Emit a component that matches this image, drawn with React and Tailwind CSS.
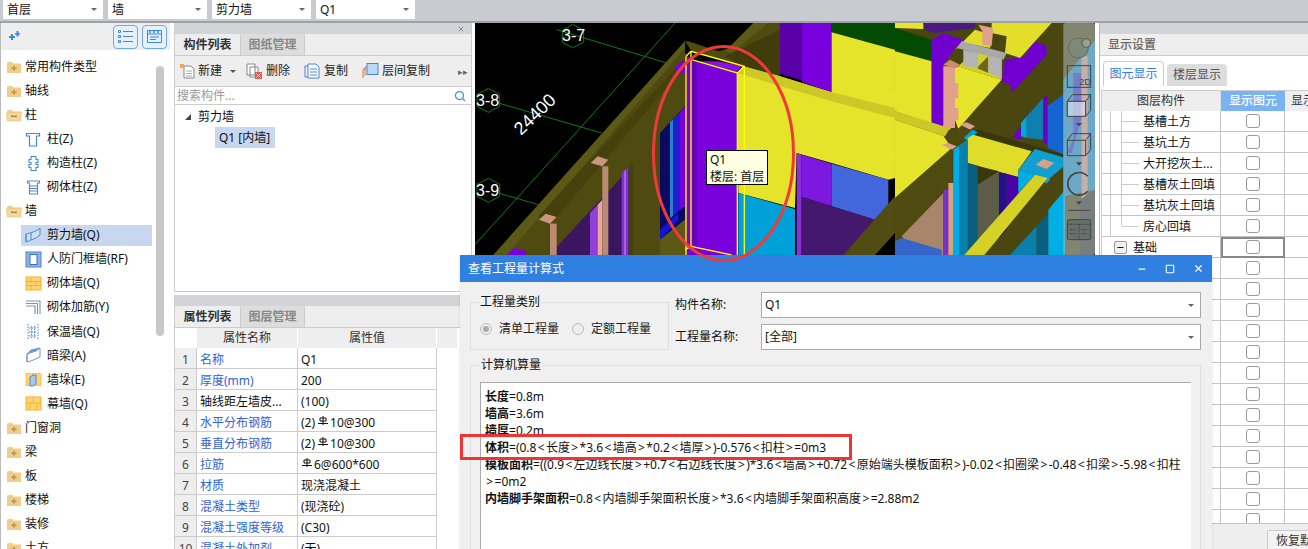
import { Minus, Search, Square, X } from 'lucide-react'

const TREE = [
    { label: '常用构件类型', type: 'closed' },
    { label: '轴线', type: 'closed' },
    { label: '柱', type: 'open' },
    { label: '柱(Z)', icon: 'column' },
    { label: '构造柱(Z)', icon: 'gzz' },
    { label: '砌体柱(Z)', icon: 'brickcol' },
    { label: '墙', type: 'open' },
    { label: '剪力墙(Q)', icon: 'shear', active: true },
    { label: '人防门框墙(RF)', icon: 'frame' },
    { label: '砌体墙(Q)', icon: 'brick' },
    { label: '砌体加筋(Y)', icon: 'rebar' },
    { label: '保温墙(Q)', icon: 'insul' },
    { label: '暗梁(A)', icon: 'beam' },
    { label: '墙垛(E)', icon: 'pier' },
    { label: '幕墙(Q)', icon: 'curtain' },
    { label: '门窗洞', type: 'closed' },
    { label: '梁', type: 'closed' },
    { label: '板', type: 'closed' },
    { label: '楼梯', type: 'closed' },
    { label: '装修', type: 'closed' },
    { label: '土方', type: 'closed' },
]

const PROPS = [
    { name: '名称', value: 'Q1', blue: true },
    { name: '厚度(mm)', value: '200', blue: true },
    { name: '轴线距左墙皮...', value: '(100)' },
    { name: '水平分布钢筋', value: '10@300', pre: '(2)', rebar: true, blue: true },
    { name: '垂直分布钢筋', value: '10@300', pre: '(2)', rebar: true, blue: true },
    { name: '拉筋', value: '6@600*600', rebar: true, blue: true },
    { name: '材质', value: '现浇混凝土', blue: true },
    { name: '混凝土类型', value: '(现浇砼)', blue: true },
    { name: '混凝土强度等级', value: '(C30)', blue: true },
    { name: '混凝土外加剂', value: '(无)', blue: true },
]

const LAYERS = ['基槽土方', '基坑土方', '大开挖灰土...', '基槽灰土回填', '基坑灰土回填', '房心回填']
const EXTRA_ROWS = Array.from({ length: 13 }, (_, i) => i)

function Folder({ open }) {
    return (
        <svg width="16" height="14" viewBox="0 0 16 14" className="shrink-0">
            <path d="M1 3.5 L1 2.5 L6 1.5 L7 3.5 L15 3.5 L15 13 L1 13 Z" fill="#f0cd8c" />
            {open ? (
                <>
                    <path d="M0 5 L15.5 4 L14.5 13 L1.5 13 Z" fill="#f5d79e" stroke="#e3b970" strokeWidth="0.5" />
                    <rect x="5" y="7.5" width="6" height="1.6" fill="#b58a3e" />
                </>
            ) : (
                <>
                    <rect x="5.5" y="7.5" width="5" height="1.6" fill="#c2963f" />
                    <rect x="7.2" y="5.8" width="1.6" height="5" fill="#c2963f" />
                </>
            )}
        </svg>
    )
}

function TreeIcon({ name }) {
    const blue = '#4a86d0'
    const amber = '#f8b418'
    return (
        <svg width="17" height="17" viewBox="0 0 17 17" fill="none" className="shrink-0">
            {name === 'column' && <path d="M1.5 2.5h13v2.5h-3v10h-7V5h-3z" stroke={blue} strokeWidth="1.2" />}
            {name === 'gzz' && <path d="M6 1.5h5v3h2v3h-2v2h2v3h-2v3H6v-3H4v-3h2v-2H4v-3h2z" stroke={blue} strokeWidth="1.1" />}
            {name === 'brickcol' && <path d="M2.5 2h12v2h-2v11h-8V4h-2zM5 7h7M5 9.500h7M5 12h7" stroke="#5b86bb" strokeWidth="1.1" />}
            {name === 'shear' && (
                <>
                    <path d="M1 7 C5 6 11 5 15 1 L15 8 C11 12 5 13 1 15 Z" fill="#cfe0f5" stroke={blue} />
                    <path d="M1 7 L1 15 M6 6 L6 13" stroke={blue} />
                </>
            )}
            {name === 'frame' && (
                <>
                    <rect x="1" y="1" width="15" height="15" fill="#8fb4e4" stroke={blue} />
                    <rect x="5" y="3.500" width="7" height="10" fill="#fff" stroke="#3a6fb5" />
                </>
            )}
            {name === 'brick' && (
                <>
                    <rect x="1" y="2" width="15" height="13" fill="#ffd27a" stroke={amber} />
                    <path d="M1 6.500h15M1 10.500h15M6 2v4.500M11 6.500v4M6 10.500V15" stroke={amber} />
                </>
            )}
            {name === 'rebar' && <path d="M1 2h14v13M1 4.500h11.500V15M1 7h9v8" stroke="#7d93ad" strokeWidth="1.1" />}
            {name === 'insul' && <path d="M3 1v15M13 1v15M6.500 3v12M9.500 3v12M4 5h8M4 9h8M4 13h8" stroke={blue} strokeDasharray="1.5 1.2" />}
            {name === 'beam' && (
                <>
                    <path d="M2 7 L6 3 L15 1 L15 10 L6 14 L2 15 Z" fill="#fff" stroke="#7d93ad" />
                    <path d="M2 7 L11 4 L15 1 M2 7V15" stroke="#7d93ad" />
                    <path d="M3 6 L6 3 L15 1 L11 4 Z" fill="#5f9be0" />
                </>
            )}
            {name === 'pier' && (
                <>
                    <rect x="1" y="2.500" width="15" height="12" fill="#ffd27a" stroke={amber} strokeDasharray="2 1" />
                    <path d="M5 6 L8 4 L11 4 L11 13 L8 15 L5 15 Z" fill="#a8c8ee" stroke={blue} />
                </>
            )}
            {name === 'curtain' && (
                <>
                    <rect x="1" y="2" width="15" height="13" fill="#ffd27a" stroke={amber} />
                    <path d="M1 8h15M8.500 2v6M5 8v7M12 8v7" stroke={amber} />
                </>
            )}
        </svg>
    )
}

function SelectBox({ label, className }) {
    return (
        <div className={`flex h-[19px] items-center justify-between bg-white pl-1 pr-1.5 text-xs ${className}`}>
            <span>{label}</span>
            <span className="h-0 w-0 border-x-[3px] border-t-[3px] border-x-transparent border-t-[#666]" />
        </div>
    )
}

function RebarMark() {
    return (
        <svg width="10" height="10" viewBox="0 0 10 10" fill="none" className="mb-1 ml-px mr-[2px] inline-block">
            <path d="M2 2h6v3H2zM5 0v9M0 7.500h10" stroke="#111" strokeWidth="1" />
        </svg>
    )
}

function LeftPanel() {
    return (
        <aside className="flex h-full w-[170px] shrink-0 flex-col border-l border-[#bbb] bg-white">
            <div className="flex h-[27px] shrink-0 items-center justify-between bg-[#eeeeee] pl-[6px] pr-[3px]">
                <svg width="13" height="11" viewBox="0 0 13 11" fill="#3f85d8">
                    <path d="M2 5h2V3h2v2h2v2H6v2H4V7H2zM8 2h1.500V0h2v2H13v1.600h-1.500v2h-2v-2H8z" />
                </svg>
                <div className="flex gap-[4px]">
                    <div className="flex h-[24px] w-[25px] items-center justify-center rounded-[4px] border border-[#6fa8e8] bg-[#e6f1fc]">
                        <svg width="15" height="13" viewBox="0 0 15 13" fill="none" stroke="#3f85d8">
                            <path d="M5 1.500h10M5 6.500h10M5 11.500h10M0.500 0.500h2v2h-2zM0.500 5.500h2v2h-2zM0.500 10.500h2v2h-2z" />
                        </svg>
                    </div>
                    <div className="flex h-[24px] w-[25px] items-center justify-center rounded-[4px] border border-[#6fa8e8] bg-[#e6f1fc]">
                        <svg width="15" height="13" viewBox="0 0 15 13" fill="none" stroke="#3f85d8">
                            <path d="M0.500 0.500h14v12h-14zM0.500 4h14M3 7h9M3 9.500h6" />
                            <path d="M2 2h2M6 2h2M10 2h2" strokeWidth="1.500" />
                        </svg>
                    </div>
                </div>
            </div>
            <div className="relative flex-1 overflow-hidden pt-[5px]">
                {TREE.map((item) => (
                    <div key={item.label} className={`flex h-[24.05px] items-center whitespace-nowrap text-xs ${item.type ? 'pl-[5px]' : 'pl-[20px]'}`}>
                        {item.type ? (
                            <div className="flex items-center gap-[3px]">
                                <Folder open={item.type === 'open'} />
                                <span>{item.label}</span>
                            </div>
                        ) : (
                            <div className={`flex h-[21px] w-[131px] items-center gap-[5px] pl-[4px] ${item.active ? 'bg-[#c6d7ef]' : ''}`}>
                                <TreeIcon name={item.icon} />
                                <span>{item.label}</span>
                            </div>
                        )}
                    </div>
                ))}
                <div className="absolute left-[155px] top-[16px] h-[270px] w-[8px] rounded bg-[#c8c8c8]" />
            </div>
        </aside>
    )
}

function PanelTabs({ first, second }) {
    return (
        <div className="flex h-[22px] shrink-0 border-b border-[#ccc] bg-[#eeeeee] text-xs font-semibold">
            <div className="flex w-[65px] items-center justify-center text-[#333]">{first}</div>
            <div className="flex w-[65px] items-center justify-center border-x border-[#ccc] bg-[#dddddd] text-[#888]">{second}</div>
        </div>
    )
}

function ToolbarIcon({ name }) {
    return (
        <svg width="17" height="16" viewBox="0 0 17 16" fill="none" className="shrink-0">
            {name === 'new' && (
                <>
                    <path d="M5 3h7l3 3v9H5z" fill="#fff" stroke="#888" />
                    <path d="M1 1h4v4H1z" fill="#f3a64a" />
                    <path d="M7 8h6M7 10.500h6M7 13h6" stroke="#aaa" />
                </>
            )}
            {name === 'del' && (
                <>
                    <path d="M1 1h8v11H1zM4 4h8v10H4z" fill="#fff" stroke="#888" />
                    <rect x="9" y="9" width="7" height="7" fill="#e0584f" />
                    <path d="M10.500 10.500l4 4M14.500 10.500l-4 4" stroke="#fff" />
                </>
            )}
            {name === 'copy' && (
                <>
                    <path d="M1 3h4v11H1z" stroke="#4a86d0" />
                    <path d="M4 1h8l3 3v11H4z" fill="#fff" stroke="#4a86d0" />
                    <path d="M6 6h7M6 9h7M6 12h7" stroke="#4a86d0" />
                </>
            )}
            {name === 'floor' && (
                <>
                    <path d="M1 15V6h3M3 13V4h3" stroke="#e07a3a" />
                    <rect x="5" y="0.500" width="11" height="11" fill="#bcd6f5" stroke="#4a86d0" />
                </>
            )}
        </svg>
    )
}

function MiddlePanel() {
    return (
        <section className="flex h-full w-[298px] shrink-0 flex-col gap-[3px]">
            <div className="flex h-[269px] shrink-0 flex-col border border-t-0 border-[#ccc] bg-white">
                <div className="flex h-[11px] shrink-0 items-center justify-end bg-[#d2d4d8] pr-[6px]">
                    <X size={8} strokeWidth={3} color="#888" />
                </div>
                <PanelTabs first="构件列表" second="图纸管理" />
                <div className="flex h-[30px] shrink-0 items-center justify-between bg-[#eeeeee] pl-[4px] pr-[3px] text-xs text-[#222]">
                    <div className="flex items-center">
                        <ToolbarIcon name="new" />
                        <span className="ml-[2px]">新建</span>
                        <span className="ml-[8px] mr-[10px] h-0 w-0 border-x-[3px] border-t-[3px] border-x-transparent border-t-[#555]" />
                        <ToolbarIcon name="del" />
                        <span className="ml-[3px] mr-[14px]">删除</span>
                        <ToolbarIcon name="copy" />
                        <span className="ml-[3px] mr-[14px]">复制</span>
                        <ToolbarIcon name="floor" />
                        <span className="ml-[3px]">层间复制</span>
                    </div>
                    <span className="text-[9px] leading-none text-[#666]">▸▸</span>
                </div>
                <div className="flex h-[19px] shrink-0 items-center justify-between border-y border-[#ccc] pl-[2px] pr-[5px] text-xs text-[#999]">
                    <span>搜索构件...</span>
                    <Search size={12} strokeWidth={2.5} color="#3c8ed0" />
                </div>
                <div className="flex h-[22px] shrink-0 items-center pl-[10px] pt-[2px] text-xs">
                    <span className="mr-[7px] h-0 w-0 border-b-[6px] border-l-[6px] border-b-[#444] border-l-transparent" />
                    <span>剪力墙</span>
                </div>
                <div className="ml-[40px] flex h-[21px] w-[60px] shrink-0 items-center bg-[#c6d7ef] pl-[4px] text-xs">Q1 [内墙]</div>
            </div>
            <div className="flex min-h-0 flex-1 flex-col overflow-hidden border-x border-[#ccc] bg-white">
                <div className="h-[11px] shrink-0 bg-[#d2d4d8]" />
                <PanelTabs first="属性列表" second="图层管理" />
                <div className="grid h-[20px] shrink-0 grid-cols-[22px_101px_139px_20px] text-xs text-[#333]">
                    <div />
                    <div className="flex items-center justify-center border-r border-white bg-[#eeeeee]">属性名称</div>
                    <div className="flex items-center justify-center border-r border-white bg-[#eeeeee]">属性值</div>
                    <div className="bg-[#eeeeee]" />
                </div>
                {PROPS.map((row, i) => (
                    <div key={row.name} className="grid h-[21px] shrink-0 grid-cols-[22px_101px_139px] text-xs">
                        <div className="flex items-center justify-center border-b border-r border-[#ccc] bg-[#eeeeee] pt-[3px] text-[#444]">{i + 1}</div>
                        <div className={`flex items-center overflow-hidden whitespace-nowrap border-b border-r border-[#ccc] pl-[3px] pt-[3px] ${row.blue ? 'text-[#2f62d8]' : ''}`}>{row.name}</div>
                        <div className="flex items-center whitespace-nowrap border-b border-r border-[#ccc] pl-[3px] pt-[3px]">
                            {row.pre && <span className="mr-[2px]">{row.pre}</span>}
                            {row.rebar && <RebarMark />}
                            <span>{row.value}</span>
                        </div>
                    </div>
                ))}
            </div>
        </section>
    )
}

function Scene() {
    return (
        <svg viewBox="0 0 620 232" className="block h-[232px] w-[620px]">
            <rect width="620" height="232" fill="#000" />

            {/* left third: axes, outer frame, window openings */}
            <g transform="scale(0.3333)">
                <g stroke="#0a7a1a" strokeWidth="3" fill="none">
                    <path d="M245 20L575 120M70 240L380 330M70 510L190 545M0 665L600 0" />
                    <path d="M262 22L293 4L326 22V58L293 74L262 58Z" />
                    <path d="M6 214L40 196L74 214V250L40 268L6 250Z" />
                    <path d="M6 484L40 466L74 484V520L40 538L6 520Z" />
                </g>
                <path d="M55 696L630 55V696Z" fill="#4f4b10" />
                <path d="M55 696L630 55V75L95 696Z" fill="#5c5816" />
                <path d="M190 580L630 105V130L230 600Z" fill="#45410d" />
                <path d="M245 696V672L470 430V696Z" fill="#3a1660" />
                <path d="M460 430L474 420V696H460Z" fill="#45410d" />
                <path d="M440 450L460 432V696H440Z" fill="#8030d0" />
                <path d="M447 445L453 440V696H447Z" fill="#a860e4" />
                <path d="M345 570L368 545V696H345Z" fill="#9040d8" />
                <path d="M368 545L382 530V696H368Z" fill="#eaa890" />
                <path d="M382 430H400V696H382Z" fill="#ba8a72" />
                <path d="M347 420L368 400L400 410L382 430Z" fill="#cc957e" />
                <path d="M225 602H245V696H225Z" fill="#ba8a72" />
                <path d="M192 590L212 572L245 582L225 602Z" fill="#cc957e" />
                <path d="M100 690L120 675L155 685L150 696H100Z" fill="#7a00dc" />
                <path d="M598 135L620 115L630 120V150L610 150Z" fill="#7a00dc" />
                <path d="M555 330L630 250V590L555 650Z" fill="#0a0a60" />
                <path d="M585 298L595 288V578L585 586Z" fill="#2a80d0" />
                <path d="M595 288L615 268V560L595 578Z" fill="#2020d0" />
                <path d="M615 268L630 252V550L615 560Z" fill="#7a00dc" />
                <path d="M555 620L610 570V592L555 650Z" fill="#1515d0" />
                <path d="M555 650L630 590V696H555Z" fill="#5c5816" />
            </g>

            {/* middle third: selected wall and the long yellow wall */}
            <g transform="translate(210 0) scale(0.3333)">
                <path d="M0 55L20 85L160 130L285 160V0H205L135 75L100 85L10 55Z" fill="#4f4b10" />
                <path d="M120 100L285 20V160L170 130Z" fill="#403c0c" />
                <path d="M205 0H250L140 90L120 85Z" fill="#5c5816" />
                <path d="M285 0H350V172L285 152Z" fill="#5a00a8" />
                <path d="M350 0H440V208L350 176Z" fill="#7900dd" />
                <path d="M440 0H630V80L440 28Z" fill="#034a03" />
                <path d="M440 28L630 80V260L440 210Z" fill="#e6e32b" />
                <path d="M157 150L175 130L285 160L440 208L630 255V465L610 470L440 420L335 390L330 555L160 510Z" fill="#e6e32b" />
                <path d="M175 130L285 160L440 208L630 255V285L440 235L157 150Z" fill="#cdc828" />
                <path d="M335 390L350 395V696H335Z" fill="#8a30d8" />
                <path d="M350 395L440 422V550L350 522Z" fill="#7d18e0" />
                <path d="M440 422L610 470V545L570 590L440 550Z" fill="#4466dd" />
                <path d="M350 522L570 590L475 696H350Z" fill="#44186c" />
                <path d="M160 510L330 558V696H160Z" fill="#00a0d8" />
                <path d="M630 520L475 696H570L630 630Z" fill="#514d12" />
                <path d="M0 90L20 110V696H0Z" fill="#7a00dc" />
                <path d="M20 110L157 150V696H20Z" fill="#7a00dc" />
                <path d="M20 110L35 115V668L20 655Z" fill="#6500b8" />
                <path d="M100 115L172 130L155 147L45 115Z" fill="#8a10e8" />
                <g fill="none" stroke="#ffff00" strokeWidth="4">
                    <path d="M3 100L18 85L178 130V696M18 85V670M20 110L157 150L178 130M157 150V696" />
                    <path d="M3 100V696M18 670L140 696M0 680L18 670" />
                </g>
            </g>

            {/* right third: roof grid, cyan columns, beams */}
            <g transform="translate(420 0) scale(0.3333)">
                <path d="M0 0H600V696H0Z" fill="#4a4610" />
                <path d="M0 0H85V18L0 15Z" fill="#e6e32b" />
                <path d="M85 0H240V15L120 30L90 20Z" fill="#4a1a80" />
                <path d="M0 15L110 50V115L0 85Z" fill="#034a03" />
                <path d="M0 85L110 115V300L170 310L165 320L0 265Z" fill="#e6e32b" />
                <path d="M0 265L165 315L150 340L0 290Z" fill="#cdc828" />
                <path d="M0 290L145 338L170 375L0 525Z" fill="#e6e32b" />
                <path d="M110 50L145 30L260 70L185 70L145 125V310L110 298Z" fill="#7100d0" />
                <path d="M180 135L190 130L320 170L240 260L190 318L180 290Z" fill="#e6e32b" />
                <path d="M145 130H180V180H190V225H180V255H190V290H180V315H145Z" fill="#e0a08a" />
                <path d="M145 125L165 110L195 125L180 135Z" fill="#cf8a74" />
                <path d="M320 175L330 110L390 100L415 55L455 68V95L350 210L345 185Z" fill="#7100d0" />
                <path d="M290 0H470L375 105L330 90L335 40L290 30Z" fill="#e3de2a" />
                <path d="M180 80L240 20L290 35L285 75L210 60Z" fill="#e0dc2a" />
                <path d="M190 130L250 75L320 105L320 170Z" fill="#d6d225" />
                <path d="M245 135L280 100V150Z" fill="#6b6716" />
                <path d="M250 5L295 15L290 70L262 65V25Z" fill="#e0a08a" />
                <path d="M205 80L250 90V135L205 130Z" fill="#b4b4b4" />
                <path d="M280 100L320 110V165L280 150Z" fill="#b4b4b4" />
                <path d="M185 75L200 55L335 90L325 110Z" fill="#a8a8a8" />
                <path d="M395 280L445 225V350L395 345Z" fill="#0e7fae" />
                <path d="M378 300L395 280V345L378 340Z" fill="#00a8e0" />
                <path d="M445 225L458 215V365L445 360Z" fill="#6a00c0" />
                <path d="M458 250L510 210V395L458 375Z" fill="#1565d0" />
                <path d="M350 345L378 310V350Z" fill="#6a00c0" />
                <path d="M250 320L510 395L505 420L220 335Z" fill="#3a370b" />
                <path d="M195 305L215 298L240 310L225 320Z" fill="#d8a088" />
                <path d="M140 365L160 360L185 370L170 380Z" fill="#d8a088" />
                <path d="M160 335L200 310L225 320L190 360L160 360Z" fill="#4f4b10" />
                <path d="M205 345L232 320L248 328L218 352Z" fill="#00a0d8" />
                <path d="M218 345L235 335L410 385L370 440V462L218 420Z" fill="#e0dc2a" />
                <path d="M175 380L218 350V696H175Z" fill="#00aee6" />
                <path d="M192 368L218 350V696H192Z" fill="#0a7fab" />
                <path d="M170 378L172 475L20 640L0 650V525Z" fill="#4f4b10" />
                <path d="M20 640L145 510V696H60Z" fill="#a8866c" />
                <path d="M0 655L20 645L140 680V696H0Z" fill="#3565c8" />
                <path d="M145 500H160V696H145Z" fill="#7a2fd0" />
                <path d="M160 480H175V696H160Z" fill="#d8a088" />
                <path d="M218 420L248 428V696H218Z" fill="#0a5f7f" />
                <path d="M248 430L312 448V696H248Z" fill="#5c5c48" />
                <path d="M248 430L312 445L248 485Z" fill="#3a370b" />
                <path d="M312 448L335 452V696H312Z" fill="#23108c" />
                <path d="M335 452L370 462V550L335 590Z" fill="#4a00a8" />
                <path d="M370 440L420 378L530 410L465 465V490L420 455Z" fill="#0f9fd0" />
                <path d="M422 425L445 408L478 420L455 438Z" fill="#d8a088" />
                <path d="M370 440L420 455L370 510Z" fill="#00aee6" />
                <path d="M268 696L465 470L530 410V500L345 696Z" fill="#4a4610" />
                <path d="M208 696L420 455L458 465L268 696Z" fill="#d6d225" />
                <path d="M345 696L425 610V696Z" fill="#0a7fab" />
                <path d="M425 610L460 570V696H425Z" fill="#0a5f7f" />
                <path d="M460 560L510 500V696H460Z" fill="#00aee6" />

                {/* translucent view toolbar */}
                <path d="M505 170L600 50V500L505 520Z" fill="#1e90d0" />
                <path d="M560 100H578V510L560 530Z" fill="#e0a08a" />
                <path d="M535 150H558V290L530 390H515L535 350Z" fill="#3030d0" />
                <path d="M555 530L600 500V696H555Z" fill="#333333" />
                <rect x="505" y="0" width="95" height="696" rx="8" fill="#b0bcc0" opacity="0.55" />
                <g fill="none" stroke="#444" strokeWidth="3">
                    <circle cx="550" cy="75" r="30" fill="#7d8a78" stroke="#666" />
                    <circle cx="574" cy="60" r="13" fill="#98a290" stroke="#555" />
                    <rect x="517" y="128" width="70" height="65" />
                    <path d="M517 235L532 215H587V262L572 280H517ZM517 235H572V280M572 235L587 215" />
                    <path d="M517 235H572V280H517Z" fill="#d8dff0" opacity="0.7" />
                    <path d="M517 352L532 332H587V380L572 398H517ZM517 352H572V398M572 352L587 332" />
                    <path d="M578 460A34 34 0 1 0 578 505" strokeWidth="5" />
                    <path d="M520 562H585" strokeWidth="3" />
                    <rect x="517" y="590" width="70" height="60" fill="#67706c" rx="4" />
                    <path d="M517 604H587M552 604V650M526 620H545M560 620H580M526 632H545M560 632H580" strokeDasharray="6 3" />
                </g>
                <path d="M543 300H561L552 310Z M543 418H561L552 428Z M543 535H561L552 545Z" fill="#444" />
                <text x="552" y="186" fontSize="28" fill="#444" fontFamily="Liberation Sans, sans-serif">2D</text>
            </g>

            {/* axis labels */}
            <g fill="#fff" fontSize="16" fontFamily="Liberation Sans, sans-serif">
                <text x="87" y="18">3-7</text>
                <text x="1" y="83">3-8</text>
                <text x="1" y="173">3-9</text>
                <text transform="translate(46 113) rotate(-44)" fontSize="18">24400</text>
            </g>
        </svg>
    )
}

function Viewport() {
    return (
        <div className="relative h-full w-[620px] shrink-0 overflow-hidden bg-black">
            <Scene />
            <div className="absolute left-[231px] top-[127px] flex h-[35px] w-[62px] flex-col justify-center border border-black bg-[#ffffe1] pl-[3px] text-xs leading-[17px]">
                <div>Q1</div>
                <div className="whitespace-nowrap">楼层: 首层</div>
            </div>
        </div>
    )
}

function CheckCell({ focused }) {
    return (
        <div className={`flex items-center justify-center border-b border-r border-[#c4c4c8] ${focused ? 'outline-2 -outline-offset-2 outline-[#888]' : ''}`}>
            <span className="h-[14px] w-[14px] rounded-[3px] border border-[#999] bg-white" />
        </div>
    )
}

function RightPanel() {
    return (
        <aside className="flex h-full min-w-0 flex-1 flex-col border-l border-[#bbb] bg-white">
            <div className="h-[11px] shrink-0 bg-[#d2d4d8]" />
            <div className="flex h-[22px] shrink-0 items-center border-b border-[#ccc] bg-[#eeeeee] pl-[8px] text-xs font-medium text-[#666]">显示设置</div>
            <div className="flex h-[34px] shrink-0 items-end gap-[3px] pb-[4px] pl-[3px]">
                <div className="flex h-[25px] w-[61px] items-center justify-center rounded-t border border-b-0 border-[#ccc] text-xs text-[#2f80e0]">图元显示</div>
                <div className="flex h-[22px] w-[60px] items-center justify-center rounded-t bg-[#dddddd] text-xs text-[#555]">楼层显示</div>
            </div>
            <div className="ml-[1px] min-h-0 flex-1 overflow-hidden border-l border-t border-[#ccc]">
                <div className="grid h-[20px] grid-cols-[119px_64px_40px] text-xs">
                    <div className="flex items-center justify-center border-r border-[#ddd] bg-[#eeeeee] text-[#333]">图层构件</div>
                    <div className="flex items-center justify-center bg-[#78b4f3] font-medium text-white">显示图元</div>
                    <div className="overflow-hidden whitespace-nowrap bg-[#eeeeee] pl-[6px] leading-[20px] text-[#333]">显示名称</div>
                </div>
                {LAYERS.map((name, i) => (
                    <div key={name} className="grid h-[21px] grid-cols-[119px_64px_40px] text-xs">
                        <div className="flex items-center border-b border-r border-[#c4c4c8] pl-[8px]">
                            <span className="w-px self-stretch bg-[#ccc]" />
                            <span className={`ml-[10px] w-px bg-[#ccc] ${i === 5 ? 'h-1/2 self-start' : 'self-stretch'}`} />
                            <span className="h-px w-[17px] bg-[#ccc]" />
                            <span className="ml-[4px] whitespace-nowrap pt-px">{name}</span>
                        </div>
                        <CheckCell />
                        <div className="border-b border-[#c4c4c8]" />
                    </div>
                ))}
                <div className="grid h-[21px] grid-cols-[119px_64px_40px] text-xs">
                    <div className="flex items-center border-b border-r border-[#c4c4c8] pl-[12px]">
                        <span className="flex h-[13px] w-[13px] items-center justify-center rounded-[2px] border border-[#999] bg-[#f0f0f0]">
                            <Minus size={9} strokeWidth={3} />
                        </span>
                        <span className="ml-[6px] pt-px">基础</span>
                    </div>
                    <CheckCell focused />
                    <div className="border-b border-[#c4c4c8]" />
                </div>
                {EXTRA_ROWS.map((i) => (
                    <div key={i} className="grid h-[21px] grid-cols-[119px_64px_40px]">
                        <div className="border-b border-r border-[#c4c4c8]" />
                        <CheckCell />
                        <div className="border-b border-[#c4c4c8]" />
                    </div>
                ))}
            </div>
            <div className="flex h-[26px] shrink-0 items-end justify-start overflow-hidden border-t border-[#c4c4c8] bg-[#eeeeee] pl-[167px]">
                <div className="h-[19px] w-[70px] shrink-0 whitespace-nowrap rounded-t-[2px] border border-b-0 border-[#ccc] bg-[#f4f4f4] pl-[8px] text-xs leading-[20px] text-[#333]">恢复默认设置</div>
            </div>
        </aside>
    )
}

function FieldSelect({ label, value }) {
    return (
        <div className="flex h-[26px] items-center text-xs">
            <span className="w-[86px] whitespace-nowrap">{label}</span>
            <div className="flex h-[26px] flex-1 items-center justify-between border border-[#aaa] bg-white pl-[3px] pr-[6px]">
                <span>{value}</span>
                <span className="h-0 w-0 border-x-[3px] border-t-[3px] border-x-transparent border-t-[#666]" />
            </div>
        </div>
    )
}

// angle brackets sit wider in the original's font
function Formula({ text }) {
    return text.split(/([<>])/).map((part, i) =>
        part === '<' || part === '>' ? (
            <span key={i} className="mx-[1.35px]">{part}</span>
        ) : (
            <span key={i}>{part}</span>
        )
    )
}

function QuantityDialog() {
    return (
        <div className="absolute left-[460px] top-[255px] flex h-[294px] w-[752px] flex-col bg-[#f0f0f0] shadow">
            <div className="flex h-[27px] shrink-0 items-center justify-between bg-[#2f80e0] pl-[8px] pr-[8px] text-xs text-white">
                <span>查看工程量计算式</span>
                <div className="flex items-center gap-[18px]">
                    <Minus size={10} strokeWidth={3} />
                    <Square size={10} strokeWidth={2.5} />
                    <X size={11} strokeWidth={2.5} />
                </div>
            </div>
            <div className="flex flex-1 flex-col pl-[10px] pr-[11px] pt-[10px]">
                <div className="flex h-[57px] shrink-0 gap-[6px]">
                    <fieldset className="mt-[2px] h-[56px] w-[199px] shrink-0 border border-[#dfdfdf] pl-[8px]">
                        <legend className="px-px text-xs leading-[16px]">工程量类别</legend>
                        <div className="mt-[11px] flex items-center pl-[1px] text-xs text-[#222]">
                            <span className="flex h-[12px] w-[12px] items-center justify-center rounded-full border border-[#bbb] bg-[#eee]">
                                <span className="h-[6px] w-[6px] rounded-full bg-[#aaa]" />
                            </span>
                            <span className="ml-[7px] mr-[13px]">清单工程量</span>
                            <span className="h-[12px] w-[12px] rounded-full border border-[#bbb] bg-[#eee]" />
                            <span className="ml-[7px]">定额工程量</span>
                        </div>
                    </fieldset>
                    <div className="flex flex-1 flex-col gap-[6px]">
                        <FieldSelect label="构件名称:" value="Q1" />
                        <FieldSelect label="工程量名称:" value="[全部]" />
                    </div>
                </div>
                <fieldset className="mt-[8px] flex min-h-0 flex-1 flex-col border border-b-0 border-[#dfdfdf] pl-[9px] pr-[9px]">
                    <legend className="px-px text-xs leading-[16px]">计算机算量</legend>
                    <div className="mt-[9px] h-[170px] whitespace-nowrap border-l border-t border-[#aaa] bg-white pl-[4px] pt-[5px] text-xs leading-[17px] text-[#111]">
                        <div><b>长度</b>=0.8m</div>
                        <div><b>墙高</b>=3.6m</div>
                        <div><b>墙厚</b>=0.2m</div>
                        <div><b>体积</b><Formula text="=(0.8<长度>*3.6<墙高>*0.2<墙厚>)-0.576<扣柱>=0m3" /></div>
                        <div><b>模板面积</b><Formula text="=((0.9<左边线长度>+0.7<右边线长度>)*3.6<墙高>+0.72<原始端头模板面积>)-0.02<扣圈梁>-0.48<扣梁>-5.98<扣柱" /></div>
                        <div><Formula text=">=0m2" /></div>
                        <div><b>内墙脚手架面积</b><Formula text="=0.8<内墙脚手架面积长度>*3.6<内墙脚手架面积高度>=2.88m2" /></div>
                    </div>
                </fieldset>
            </div>
            <div className="absolute left-0 top-[179px] h-[26px] w-[392px] border-[3px] border-[#ee3535]" />
        </div>
    )
}

export default function App() {
    return (
        <div className="relative flex h-[549px] w-[1308px] flex-col overflow-hidden bg-white font-['Noto_Sans','Noto_Sans_CJK_SC',sans-serif] text-[#111]">
            {/* level pickers */}
            <div className="flex h-[23px] shrink-0 gap-[5px] border-b-2 border-[#9ea1a6] bg-[#c9cbd0] pl-[3px]">
                <SelectBox label="首层" className="w-[100px]" />
                <SelectBox label="墙" className="w-[99px]" />
                <SelectBox label="剪力墙" className="w-[99px]" />
                <SelectBox label="Q1" className="w-[99px]" />
            </div>
            <div className="flex min-h-0 flex-1">
                <LeftPanel />
                <div className="w-[4px] shrink-0" />
                <MiddlePanel />
                <div className="w-[3px] shrink-0" />
                <Viewport />
                <div className="w-[4px] shrink-0" />
                <RightPanel />
            </div>
            <QuantityDialog />
            <svg viewBox="0 0 1308 549" className="pointer-events-none absolute inset-0 h-[549px] w-[1308px]">
                <ellipse cx="723.500" cy="153.500" rx="70" ry="107" fill="none" stroke="#f03a3a" strokeWidth="3" />
            </svg>
        </div>
    )
}
